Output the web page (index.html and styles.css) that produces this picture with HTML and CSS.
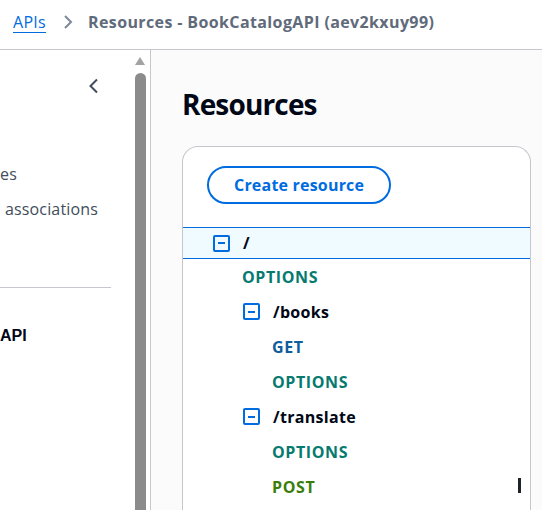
FILE: index.html
```html
<!DOCTYPE html>
<html lang="en">
<head>
<meta charset="utf-8">
<title>Resources - BookCatalogAPI</title>
<link rel="stylesheet" href="styles.css">
</head>
<body>
<header class="crumbs">
  <a class="crumb-link" href="#">APIs</a>
  <svg class="crumb-sep" width="10" height="14" viewBox="0 0 10 14"><path d="M2 1 L8 7 L2 13" fill="none" stroke="#7d8998" stroke-width="2"/></svg>
  <span class="crumb-current">Resources - BookCatalogAPI (aev2kxuy99)</span>
</header>
<div class="layout">
  <aside class="nav">
    <div class="nav-top">
      <svg class="nav-close" width="12" height="16" viewBox="0 0 12 16"><path d="M9 1.5 L2.5 8 L9 14.5" fill="none" stroke="#414d5c" stroke-width="2"/></svg>
    </div>
    <ul class="nav-list">
      <li class="nav-item">es</li>
      <li class="nav-item nav-item-indent">associations</li>
    </ul>
    <hr class="nav-divider">
    <div class="nav-api">API</div>
  </aside>
  <div class="scrollbar">
    <div class="scroll-arrow"></div>
    <div class="scroll-thumb"></div>
  </div>
  <main class="content">
    <h1 class="title">Resources</h1>
    <section class="card">
      <div class="card-head">
        <button class="btn">Create resource</button>
      </div>
      <div class="tree">
        <div class="row row-selected lvl0">
          <span class="toggle"></span><span class="res">/</span>
        </div>
        <div class="row m0"><span class="method options">OPTIONS</span></div>
        <div class="row lvl1"><span class="toggle"></span><span class="res">/books</span></div>
        <div class="row m1"><span class="method get">GET</span></div>
        <div class="row m1"><span class="method options">OPTIONS</span></div>
        <div class="row lvl1"><span class="toggle"></span><span class="res">/translate</span></div>
        <div class="row m1"><span class="method options">OPTIONS</span></div>
        <div class="row m1"><span class="method post">POST</span></div>
      </div>
    </section>
  </main>
</div>
<div class="cursor"></div>
</body>
</html>
```
FILE: styles.css
```css
* { box-sizing: border-box; }
html, body { margin: 0; padding: 0; }
body {
  width: 542px;
  height: 510px;
  overflow: hidden;
  position: relative;
  font-family: "Open Sans", "Noto Sans", sans-serif;
  color: #000716;
  background: #ffffff;
}
.crumbs {
  height: 50px;
  border-bottom: 1px solid #c6c6cd;
  display: flex;
  align-items: center;
  padding: 0 0 5px 13px;
  font-size: 16px;
}
.crumb-link {
  color: #006ce0;
  text-decoration: underline;
  text-underline-offset: 4px;
  text-decoration-thickness: 1px;
  letter-spacing: 0.3px;
}
.crumb-sep { margin: 0 15px 0 17px; }
.crumb-current { color: #5f6b7a; font-weight: 700; letter-spacing: 0.38px; }

.layout {
  display: flex;
  height: 460px;
}
.nav {
  width: 134px;
  flex: none;
  overflow: hidden;
  background: #fff;
}
.nav-top {
  height: 72px;
  display: flex;
  align-items: center;
  justify-content: flex-end;
  padding-right: 34px;
}
.nav-list {
  list-style: none;
  margin: 35px 0 0;
  padding: 0;
}
.nav-item {
  height: 35px;
  line-height: 35px;
  font-size: 16px;
  color: #414d5c;
  white-space: nowrap;
  letter-spacing: 0.15px;
}
.nav-item-indent { padding-left: 5px; }
.nav-divider {
  width: 111px;
  margin: 60px 0 0;
  border: 0;
  border-top: 1px solid #c6c6cd;
}
.nav-api {
  margin-top: 37px;
  font-family: "Liberation Sans", Arial, sans-serif;
  font-weight: 700;
  font-size: 16px;
  line-height: 22px;
  color: #000716;
}
.scrollbar {
  width: 17px;
  flex: none;
  border-right: 1px solid #c6c6cd;
  padding: 7px 0 0 1px;
  display: flex;
  flex-direction: column;
  background: #fff;
}
.scroll-arrow {
  width: 0;
  height: 0;
  border-left: 5.5px solid transparent;
  border-right: 5.5px solid transparent;
  border-bottom: 8px solid #a3a3a3;
}
.scroll-thumb {
  margin-top: 8px;
  width: 11px;
  flex: 1;
  background: #8b8b8b;
  border-radius: 5.5px 5.5px 0 0;
}
.content {
  flex: 1;
  background: #fbfbfc;
  padding: 36px 11px 0 31px;
  overflow: hidden;
}
.title {
  margin: 0 0 24px;
  font-size: 28px;
  line-height: 36px;
  font-weight: 700;
  letter-spacing: -0.03em;
  color: #000716;
}
.card {
  background: #fff;
  border: 1px solid #c6c6cd;
  border-bottom: 0;
  border-radius: 16px 16px 0 0;
  height: 400px;
}
.card-head { padding: 19px 24px 23px; }
.btn {
  height: 38px;
  padding: 0 25px;
  border: 2px solid #006ce0;
  border-radius: 19px;
  background: #fff;
  color: #006ce0;
  font-family: inherit;
  font-size: 16px;
  font-weight: 700;
  letter-spacing: 0.2px;
}
.row {
  height: 35px;
  display: flex;
  align-items: center;
  font-size: 16px;
  font-weight: 700;
}
.row-selected {
  height: 32px;
  border-top: 1px solid #006ce0;
  border-bottom: 1px solid #006ce0;
  background: #f0fbff;
}
.lvl0 { padding-left: 30px; }
.lvl1 { padding-left: 60px; }
.m0 { padding-left: 59px; }
.m1 { padding-left: 89px; }
.toggle {
  width: 17px;
  height: 17px;
  border: 2px solid #006ce0;
  border-radius: 2px;
  margin-right: 13px;
  position: relative;
  flex: none;
}
.toggle::after {
  content: "";
  position: absolute;
  left: 3px;
  top: 5.5px;
  width: 7px;
  height: 2px;
  background: #006ce0;
}
.res { color: #000716; letter-spacing: 0.3px; }
.method { letter-spacing: 0.6px; }
.method.options { color: #067a6f; }
.method.get { color: #0f5e9c; }
.method.post { color: #3b7d0a; }
.cursor {
  position: absolute;
  left: 518px;
  top: 478px;
  width: 3px;
  height: 15px;
  background: #1f2328;
}
```
